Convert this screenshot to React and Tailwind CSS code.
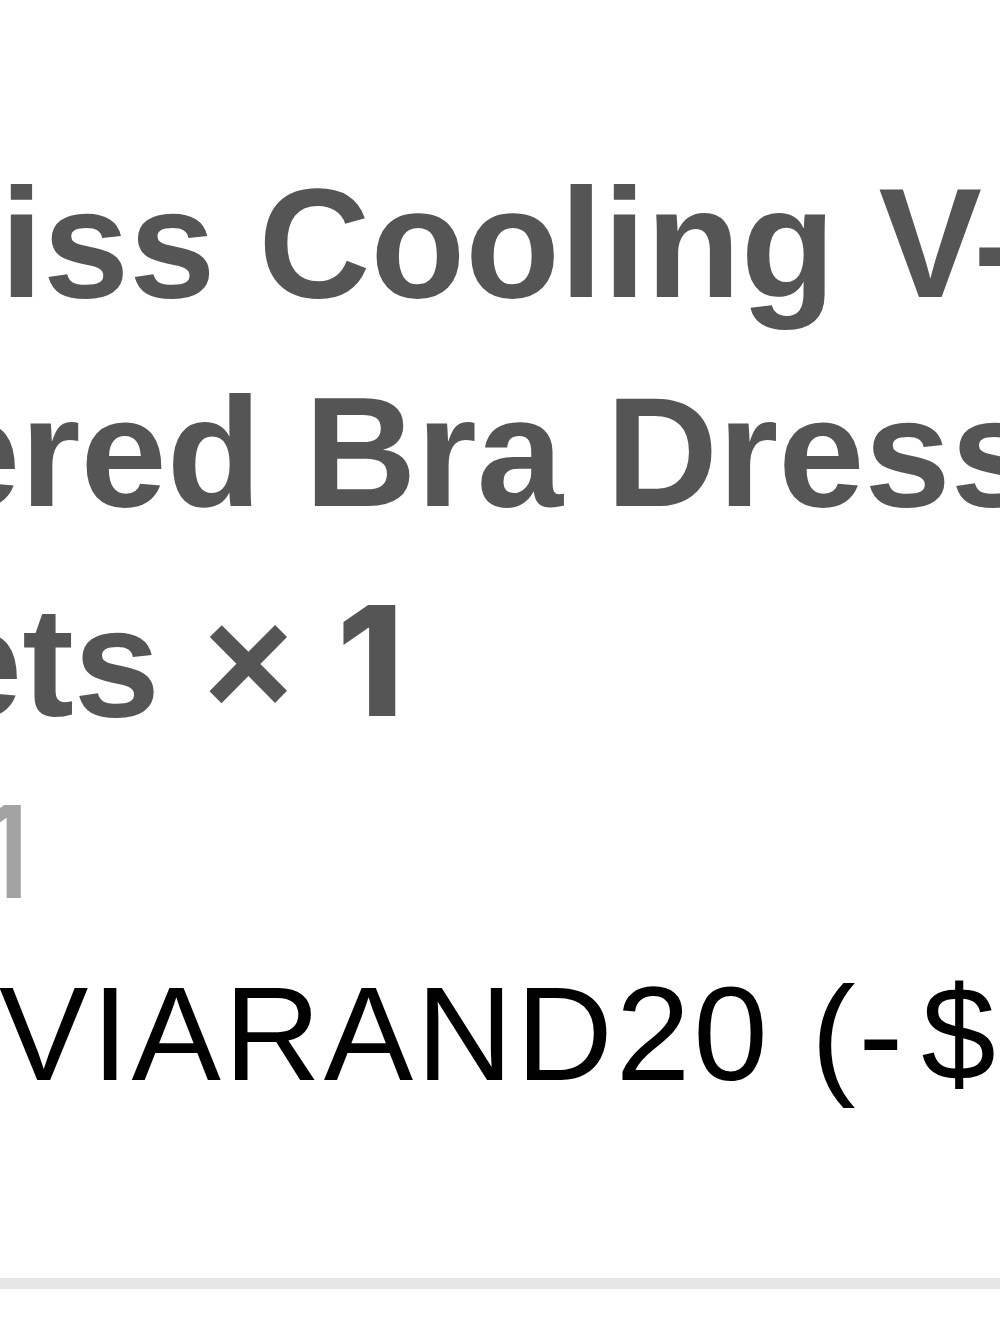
export default function App() {
  return (
    <div
      className="w-[1000px] h-[1333px] overflow-hidden bg-white flex flex-col"
      style={{ fontFamily: '"Liberation Sans", Arial, sans-serif' }}
    >
      {/* product title, bold grey, three wrapped lines */}
      <div className="pt-[139px] flex flex-col text-[155px] leading-[209px] font-bold text-[#555555] whitespace-nowrap">
        <div className="ml-[0px]">iss Cooling V-Neck</div>
        <div className="ml-[-66px]">ered Bra Dress Set</div>
        <div className="ml-[-64px]">
          ets ×{" "}
          <span className="font-['Inter',sans-serif] text-[152px] font-extrabold">1</span>
        </div>
      </div>

      {/* variant line */}
      <div className="mt-[10px] ml-[-22px] font-['Inter',sans-serif] text-[128px] font-medium leading-[150px] text-[#a3a3a3] whitespace-nowrap">
        1
      </div>

      {/* discount code */}
      <div className="mt-[32px] ml-[-1px] text-[134px] leading-[150px] tracking-[3px] text-black whitespace-nowrap">
        VIARAND20 (<span className="tracking-[18px]">-</span>$4.00)
      </div>

      <div className="mt-[169px] h-[11px] w-full bg-[#e6e6e6] shrink-0" />
    </div>
  );
}
